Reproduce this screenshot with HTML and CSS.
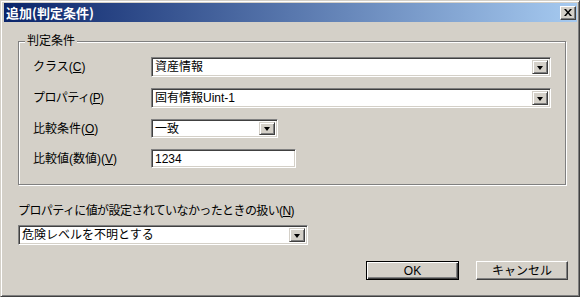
FILE: index.html
```html
<!DOCTYPE html>
<html lang="ja">
  <head>
    <meta charset="UTF-8" />
    <title>追加(判定条件)</title>
    <link rel="stylesheet" href="styles.css">
  </head>
  <body>
    <div class="window">
      <!-- タイトルバー -->
      <div class="titlebar">
        <span class="title">追加(判定条件)</span>
        <div class="close">
          <svg width="8" height="7" viewBox="0 0 8 7">
            <path d="M0 0h2l2 2.5L6 0h2L5 3.5 8 7H6L4 4.5 2 7H0l3-3.5z" fill="#000" />
          </svg>
        </div>
      </div>

      <!-- 判定条件 -->
      <div class="group">
        <div class="group-title">判定条件</div>
        <div class="fields">
          <div class="label">クラス(<u>C</u>)</div>
          <div class="combo wide">
            <span class="value">資産情報</span>
            <span class="drop"><i class="arrow"></i></span>
          </div>

          <div class="label kana">プロパティ(<u>P</u>)</div>
          <div class="combo wide">
            <span class="value">固有情報Uint-1</span>
            <span class="drop"><i class="arrow"></i></span>
          </div>

          <div class="label">比較条件(<u>O</u>)</div>
          <div class="combo short">
            <span class="value">一致</span>
            <span class="drop"><i class="arrow"></i></span>
          </div>

          <div class="label">比較値(数値)(<u>V</u>)</div>
          <div class="textbox">1234</div>
        </div>
      </div>

      <div class="nodata-label kana">プロパティに値が設定されていなかったときの扱い(<u>N</u>)</div>
      <div class="combo nodata">
        <span class="value">危険レベルを不明とする</span>
        <span class="drop"><i class="arrow"></i></span>
      </div>

      <!-- ボタン -->
      <div class="buttons">
        <div class="btn default"><span>OK</span></div>
        <div class="btn"><span>キャンセル</span></div>
      </div>
    </div>
  </body>
</html>
```

FILE: styles.css
```css
/* 全体 */
body {
  margin: 0;
  background: #ffffff;
  font-family: "Liberation Sans", "Noto Sans CJK JP", sans-serif;
  font-size: 12px;
  color: #000;
}

.window {
  width: 580px;
  height: 297px;
  box-sizing: border-box;
  background: #d4d0c8;
  border: 1px solid;
  border-color: #d4d0c8 #404040 #404040 #d4d0c8;
  box-shadow: inset 1px 1px #fff, inset -1px -1px #808080;
  padding: 2px 2px 1px 3px;
  display: flex;
  flex-direction: column;
}

/* タイトルバー */
.titlebar {
  height: 19px;
  flex: none;
  background: linear-gradient(90deg, #0a246a, #a6caf0);
  display: flex;
  align-items: center;
  justify-content: space-between;
  padding: 0 1px 0 2px;
  color: #fff;
  font-family: "Noto Sans CJK JP", sans-serif;
  font-size: 13px;
  font-weight: bold;
  line-height: 19px;
}

.close {
  width: 16px;
  height: 14px;
  box-sizing: border-box;
  background: #d4d0c8;
  border: 1px solid;
  border-color: #fff #404040 #404040 #fff;
  box-shadow: inset -1px -1px #808080;
  display: flex;
  align-items: center;
  justify-content: center;
}

/* グループボックス */
.group {
  margin: 19px 11px 0 14px;
  height: 144px;
  box-sizing: border-box;
  flex: none;
  border: 1px solid #808080;
  box-shadow: inset 1px 1px #fff, 1px 1px #fff;
}

.group-title {
  margin: -8px 0 0 6px;
  padding: 0 2px;
  width: fit-content;
  background: #d4d0c8;
  line-height: 14px;
}

.fields {
  display: grid;
  grid-template-columns: 118px auto;
  grid-template-rows: 20px 20px 19px 19px;
  row-gap: 11px;
  margin: 9px 0 0 14px;
  align-items: center;
  justify-items: start;
}

.label {
  line-height: 14px;
}

/* カナが多いラベルは少し詰める */
.kana {
  letter-spacing: -0.6px;
}

/* コンボボックス */
.combo,
.textbox {
  box-sizing: border-box;
  background: #fff;
  border: 1px solid;
  border-color: #808080 #fff #fff #808080;
  box-shadow: inset 1px 1px #404040, inset -1px -1px #d4d0c8;
  padding: 2px;
  display: flex;
  align-items: center;
  height: 20px;
}

.combo .value {
  flex: 1;
  padding-left: 1px;
  line-height: 14px;
  white-space: nowrap;
}

.drop {
  width: 16px;
  align-self: stretch;
  box-sizing: border-box;
  background: #d4d0c8;
  border: 1px solid;
  border-color: #d4d0c8 #404040 #404040 #d4d0c8;
  box-shadow: inset 1px 1px #fff, inset -1px -1px #808080;
  display: flex;
  align-items: center;
  justify-content: center;
}

.arrow {
  width: 0;
  height: 0;
  border-left: 3.5px solid transparent;
  border-right: 3.5px solid transparent;
  border-top: 4px solid #000;
  margin-top: 1px;
}

.wide {
  width: 400px;
}

.short {
  width: 127px;
  height: 19px;
}

.textbox {
  width: 145px;
  height: 19px;
  padding-left: 3px;
  line-height: 14px;
}

/* 下部 */
.nodata-label {
  margin: 19px 0 0 14px;
  line-height: 14px;
}

.nodata {
  margin: 7px 0 0 14px;
  width: 290px;
  flex: none;
}

.buttons {
  display: flex;
  justify-content: flex-end;
  gap: 17px;
  margin-top: 16px;
  padding-right: 9px;
}

.btn {
  width: 92px;
  height: 19px;
  box-sizing: border-box;
  background: #d4d0c8;
  border: 1px solid;
  border-color: #fff #404040 #404040 #fff;
  box-shadow: inset -1px -1px #808080;
  display: flex;
  align-items: center;
  justify-content: center;
  line-height: 14px;
}

.btn.default {
  width: 93px;
  border: 1px solid #000;
  box-shadow: inset 1px 1px #fff, inset -1px -1px #404040, inset -2px -2px #808080;
}
```
